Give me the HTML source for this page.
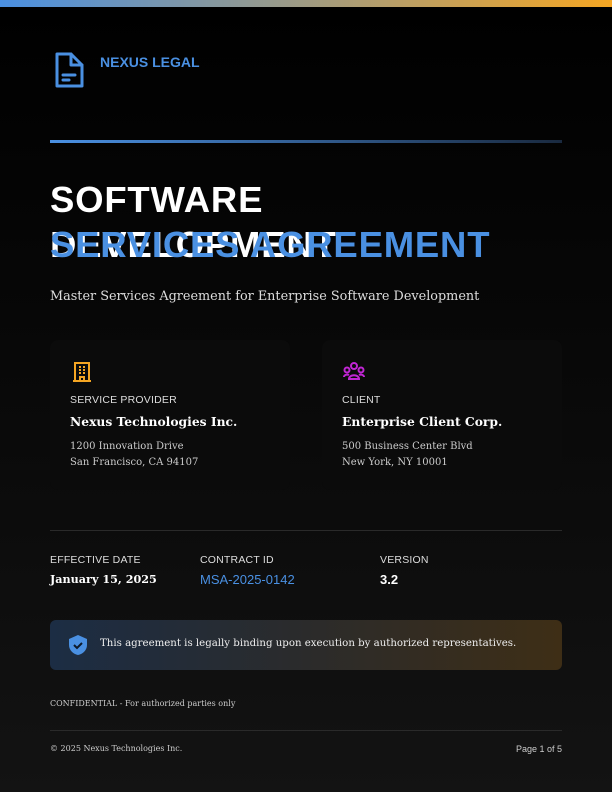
<!DOCTYPE html>
<html><head><meta charset="utf-8"><style>
*{margin:0;padding:0;box-sizing:border-box}
body{width:612px;height:792px;overflow:hidden;background:linear-gradient(180deg,#000 0%,#070707 40%,#131313 100%);color:#fff;font-family:"Liberation Sans",sans-serif;position:relative}
.bar{position:absolute;top:0;left:0;width:612px;height:7px;background:linear-gradient(90deg,#4a90e2,#f5a623)}
.abs{position:absolute;white-space:nowrap}
.sans{font-family:"Liberation Sans",sans-serif}
.serif{font-family:"DejaVu Serif",serif}
.h{font-weight:700;font-size:36.5px;letter-spacing:0.8px;line-height:1}
.card{position:absolute;top:340px;width:240px;height:150px;border-radius:8px;background:#0b0b0b}
.lbl{font-size:10.5px;color:#ddd;letter-spacing:0.2px}
.nm{font-family:"DejaVu Serif",serif;font-weight:700;font-size:12.3px;color:#fff}
.ad{font-family:"DejaVu Serif",serif;font-size:10px;color:#ccc;line-height:16px}
</style></head><body>
<div class="bar"></div>
<svg class="abs" style="left:54px;top:51px" width="32" height="38" viewBox="0 0 32 38" fill="none" stroke="#4a90e2" stroke-width="3" stroke-linejoin="round" stroke-linecap="round"><path d="M3 3h14l11 11v21H3z"/><path d="M17 3v11h11"/><path d="M9 24h12M9 29h6"/></svg>
<div class="abs sans" style="left:100px;top:54px;font-size:14px;font-weight:700;color:#4a90e2">NEXUS LEGAL</div>
<div class="abs" style="left:50px;top:140px;width:512px;height:3px;background:linear-gradient(90deg,#4a90e2,#1a2a40)"></div>
<div class="abs h" style="left:50px;top:182px">SOFTWARE</div>
<div class="abs h" style="left:50px;top:227px">DEVELOPMENT</div>
<div class="abs h" style="left:50px;top:227px;color:#4a90e2">SERVICES AGREEMENT</div>
<div class="abs serif" style="left:50px;top:289px;font-size:12.8px;color:#ddd">Master Services Agreement for Enterprise Software Development</div>
<div class="card" style="left:50px">
<svg class="abs" style="left:23px;top:22px" width="18" height="20" viewBox="0 0 18 20" fill="none" stroke="#f5a623" stroke-width="2"><rect x="2" y="1" width="14" height="18"/><path d="M0 19h18M7 19v-4h4v4M6 5h2M10 5h2M6 8h2M10 8h2M6 11h2M10 11h2"/></svg>
<div class="abs lbl" style="left:20px;top:54px">SERVICE PROVIDER</div>
<div class="abs nm" style="left:20px;top:74px">Nexus Technologies Inc.</div>
<div class="abs ad" style="left:20px;top:99px">1200 Innovation Drive<br>San Francisco, CA 94107</div>
</div>
<div class="card" style="left:322px">
<svg class="abs" style="left:21px;top:22px" width="22" height="20" viewBox="0 0 22 20" fill="none" stroke="#c026d3" stroke-width="2"><circle cx="11" cy="4" r="3"/><circle cx="4" cy="8" r="2.5"/><circle cx="18" cy="8" r="2.5"/><path d="M6 17c0-5 10-5 10 0zM1 15c0-2 3-3 5-2M21 15c0-2-3-3-5-2"/></svg>
<div class="abs lbl" style="left:20px;top:54px">CLIENT</div>
<div class="abs nm" style="left:20px;top:74px">Enterprise Client Corp.</div>
<div class="abs ad" style="left:20px;top:99px">500 Business Center Blvd<br>New York, NY 10001</div>
</div>
<div class="abs" style="left:50px;top:530px;width:512px;height:1px;background:#2a2a2a"></div>
<div class="abs lbl" style="left:50px;top:554px">EFFECTIVE DATE</div>
<div class="abs serif" style="left:50px;top:572px;font-size:11.2px;font-weight:700">January 15, 2025</div>
<div class="abs lbl" style="left:200px;top:554px">CONTRACT ID</div>
<div class="abs" style="left:200px;top:572px;font-size:13px;color:#4a90e2">MSA-2025-0142</div>
<div class="abs lbl" style="left:380px;top:554px">VERSION</div>
<div class="abs" style="left:380px;top:572px;font-size:13px;font-weight:700">3.2</div>
<div class="abs" style="left:50px;top:620px;width:512px;height:50px;border-radius:6px;background:linear-gradient(90deg,#1c2d44,#2b2b2b 50%,#3e2e16)"></div>
<svg class="abs" style="left:67px;top:634px" width="22" height="22" viewBox="0 0 22 22"><path d="M11 1l9 4v6c0 5-4 9-9 10C6 20 2 16 2 11V5z" fill="#4a90e2"/><path d="M7 11l3 3 5-5" fill="none" stroke="#0e1a2a" stroke-width="2"/></svg>
<div class="abs serif" style="left:100px;top:638px;font-size:10.2px;color:#eee">This agreement is legally binding upon execution by authorized representatives.</div>
<div class="abs serif" style="left:50px;top:699px;font-size:8px;color:#ccc">CONFIDENTIAL - For authorized parties only</div>
<div class="abs" style="left:50px;top:730px;width:512px;height:1px;background:#2a2a2a"></div>
<div class="abs serif" style="left:50px;top:744px;font-size:8px;color:#ccc">© 2025 Nexus Technologies Inc.</div>
<div class="abs" style="right:50px;top:744px;font-size:9px;color:#ccc">Page 1 of 5</div>
</body></html>
